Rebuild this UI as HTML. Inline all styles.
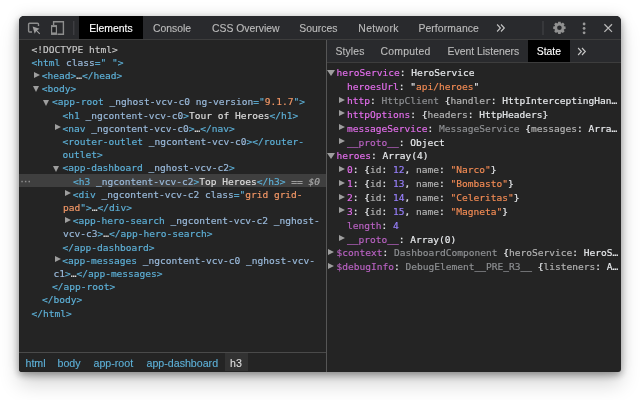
<!DOCTYPE html>
<html lang="en"><head><meta charset="utf-8"><title>DevTools</title>
<style>
html,body{margin:0;padding:0;}
body{width:640px;height:400px;background:#fff;position:relative;overflow:hidden;font-family:"Liberation Sans","DejaVu Sans",sans-serif;}
#win{position:absolute;left:19px;top:16px;width:602px;height:356px;background:#242424;border-radius:5px 5px 3px 3px;box-shadow:0 3px 7px rgba(0,0,0,.32),0 12px 20px rgba(0,0,0,.17),0 0 15px rgba(0,0,0,.13);overflow:hidden;will-change:transform;}
#win *{box-sizing:border-box;}
.abs{position:absolute;}
#tb{left:0;top:0;width:602px;height:24px;background:#292a2d;border-bottom:1px solid #3d3d3d;}
.tab{position:absolute;top:0;height:23px;line-height:25.2px;font-size:10.4px;-webkit-text-stroke:0.12px currentColor;color:#bcbcbc;white-space:nowrap;}
.tab.sel{background:#000;color:#fff;}
.row{position:absolute;height:13.2px;line-height:13.2px;white-space:pre;font-family:"DejaVu Sans Mono","Liberation Mono",monospace;font-size:9.55px;color:#dfdfdf;-webkit-text-stroke:0.16px currentColor;}
.t{color:#5db0d7}.a{color:#9bbbdc}.v{color:#f29766}.x{color:#dedede}.g{color:#c8c8c8}
.eq{color:#a8a8a8}
.n{color:#e36eec}.nd{color:#b962c2}.w{color:#e8eaed}.s{color:#f28b54}.num{color:#9980ff}.c{color:#8f9194}.k{color:#b4b4b4}
.arr{position:absolute;width:0;height:0;}
.arr.r{border-left:6.2px solid #9e9e9e;border-top:3.9px solid transparent;border-bottom:3.9px solid transparent;}
.arr.d{border-top:6.2px solid #9e9e9e;border-left:3.8px solid transparent;border-right:3.8px solid transparent;}
</style></head><body>
<div id="win">

<div id="tb" class="abs">
<div class="tab sel" style="left:60px;width:64px;text-align:center">Elements</div>
<div class="tab" style="left:134px;letter-spacing:0px">Console</div>
<div class="tab" style="left:193px;letter-spacing:0px">CSS Overview</div>
<div class="tab" style="left:280.3px;letter-spacing:0px">Sources</div>
<div class="tab" style="left:339.3px;letter-spacing:0.33px">Network</div>
<div class="tab" style="left:399.4px;letter-spacing:0.1px">Performance</div>
</div>
<div class="abs" style="left:0;top:157.7px;width:307px;height:13.8px;background:#3f3f3f"></div>
<div class="row" style="left:12.5px;top:26.5px"><span class="g">&lt;!DOCTYPE html&gt;</span></div>
<div class="row" style="left:12.5px;top:39.7px"><span class="t">&lt;html </span><span class="a">class</span><span class="t">="</span><span class="v"> </span><span class="t">"&gt;</span></div>
<div class="arr r" style="left:15.1px;top:55.6px"></div>
<div class="row" style="left:22.8px;top:52.9px"><span class="t">&lt;head&gt;</span><span class="x">…</span><span class="t">&lt;/head&gt;</span></div>
<div class="arr d" style="left:13.7px;top:70.3px"></div>
<div class="row" style="left:22.8px;top:66.1px"><span class="t">&lt;body&gt;</span></div>
<div class="arr d" style="left:24px;top:83.5px"></div>
<div class="row" style="left:33.1px;top:79.3px"><span class="t">&lt;app-root </span><span class="a">_nghost-vcv-c0 ng-version</span><span class="t">="</span><span class="v">9.1.7</span><span class="t">"&gt;</span></div>
<div class="row" style="left:43.6px;top:92.5px"><span class="t">&lt;h1 </span><span class="a">_ngcontent-vcv-c0</span><span class="t">&gt;</span><span class="x">Tour of Heroes</span><span class="t">&lt;/h1&gt;</span></div>
<div class="arr r" style="left:35.7px;top:108.4px"></div>
<div class="row" style="left:43.4px;top:105.7px"><span class="t">&lt;nav </span><span class="a">_ngcontent-vcv-c0</span><span class="t">&gt;</span><span class="x">…</span><span class="t">&lt;/nav&gt;</span></div>
<div class="row" style="left:43.6px;top:118.9px"><span class="t">&lt;router-outlet </span><span class="a">_ngcontent-vcv-c0</span><span class="t">&gt;&lt;/router-</span></div>
<div class="row" style="left:43.6px;top:132.1px"><span class="t">outlet&gt;</span></div>
<div class="arr d" style="left:34.3px;top:149.5px"></div>
<div class="row" style="left:43.4px;top:145.3px"><span class="t">&lt;app-dashboard </span><span class="a">_nghost-vcv-c2</span><span class="t">&gt;</span></div>
<div class="row" style="left:53.9px;top:158.5px"><span class="t">&lt;h3 </span><span class="a">_ngcontent-vcv-c2</span><span class="t">&gt;</span><span class="x">Top Heroes</span><span class="t">&lt;/h3&gt;</span><span class="eq"> == <i>$0</i></span></div>
<div class="arr r" style="left:46px;top:174.4px"></div>
<div class="row" style="left:53.7px;top:171.7px"><span class="t">&lt;div </span><span class="a">_ngcontent-vcv-c2 class</span><span class="t">="</span><span class="v">grid grid-</span></div>
<div class="row" style="left:44px;top:184.9px"><span class="v">pad</span><span class="t">"&gt;</span><span class="x">…</span><span class="t">&lt;/div&gt;</span></div>
<div class="arr r" style="left:46px;top:200.8px"></div>
<div class="row" style="left:53.7px;top:198.1px"><span class="t">&lt;app-hero-search </span><span class="a">_ngcontent-vcv-c2 _nghost-</span></div>
<div class="row" style="left:44px;top:211.3px"><span class="a">vcv-c3</span><span class="t">&gt;</span><span class="x">…</span><span class="t">&lt;/app-hero-search&gt;</span></div>
<div class="row" style="left:43.6px;top:224.5px"><span class="t">&lt;/app-dashboard&gt;</span></div>
<div class="arr r" style="left:35.5px;top:240.4px"></div>
<div class="row" style="left:43.2px;top:237.7px"><span class="t">&lt;app-messages </span><span class="a">_ngcontent-vcv-c0 _nghost-vcv-</span></div>
<div class="row" style="left:34.4px;top:250.9px"><span class="a">c1</span><span class="t">&gt;</span><span class="x">…</span><span class="t">&lt;/app-messages&gt;</span></div>
<div class="row" style="left:33px;top:264.1px"><span class="t">&lt;/app-root&gt;</span></div>
<div class="row" style="left:23px;top:277.3px"><span class="t">&lt;/body&gt;</span></div>
<div class="row" style="left:12.5px;top:290.5px"><span class="t">&lt;/html&gt;</span></div>
<div class="abs" style="left:0;top:336px;width:307px;height:20px;background:#242424;border-top:1px solid #4a4a4a"></div>
<div class="tab" style="left:6.5px;top:337px;height:18px;line-height:21.4px;font-size:10.65px;color:#5db0d7">html</div>
<div class="tab" style="left:38.5px;top:337px;height:18px;line-height:21.4px;font-size:10.65px;color:#5db0d7">body</div>
<div class="tab" style="left:74.5px;top:337px;height:18px;line-height:21.4px;font-size:10.65px;color:#5db0d7">app-root</div>
<div class="tab" style="left:127.5px;top:337px;height:18px;line-height:21.4px;font-size:10.65px;color:#5db0d7">app-dashboard</div>
<div class="tab" style="left:205.5px;top:337px;height:18px;line-height:21.4px;font-size:10.65px;width:23px;text-align:center;background:#323232;color:#dedede">h3</div>
<div class="abs" style="left:307px;top:24px;width:1px;height:332px;background:#565656"></div>
<div class="abs" style="left:308px;top:24px;width:294px;height:23.3px;background:#292a2d;border-bottom:1px solid #3d3d3d"></div>
<div class="tab" style="left:316.5px;top:24px;height:22px;line-height:24px;letter-spacing:0.12px">Styles</div>
<div class="tab" style="left:361.5px;top:24px;height:22px;line-height:24px;letter-spacing:0.25px">Computed</div>
<div class="tab" style="left:428.5px;top:24px;height:22px;line-height:24px;letter-spacing:0px">Event Listeners</div>
<div class="tab sel" style="left:509px;top:24px;height:22px;line-height:24px;width:41.7px;text-align:center">State</div>
<div class="arr d" style="left:308.3px;top:53.8px;border-left-width:4.1px;border-right-width:4.1px"></div>
<div class="row" style="left:317.6px;top:50.3px;height:13.85px;line-height:13.85px"><span class="n">heroService</span><span class="w">: HeroService</span></div>
<div class="row" style="left:328.1px;top:64.15px;height:13.85px;line-height:13.85px"><span class="n">heroesUrl</span><span class="w">: "</span><span class="s">api/heroes</span><span class="w">"</span></div>
<div class="arr r" style="left:319.5px;top:80.6px"></div>
<div class="row" style="left:328.1px;top:78px;height:13.85px;line-height:13.85px"><span class="n">http</span><span class="w">: </span><span class="c">HttpClient </span><span class="w">{</span><span class="k">handler</span><span class="w">: HttpInterceptingHan…</span></div>
<div class="arr r" style="left:319.5px;top:94.45px"></div>
<div class="row" style="left:328.1px;top:91.85px;height:13.85px;line-height:13.85px"><span class="n">httpOptions</span><span class="w">: {</span><span class="k">headers</span><span class="w">: HttpHeaders}</span></div>
<div class="arr r" style="left:319.5px;top:108.3px"></div>
<div class="row" style="left:328.1px;top:105.7px;height:13.85px;line-height:13.85px"><span class="n">messageService</span><span class="w">: </span><span class="c">MessageService </span><span class="w">{</span><span class="k">messages</span><span class="w">: Arra…</span></div>
<div class="arr r" style="left:319.5px;top:122.15px"></div>
<div class="row" style="left:328.1px;top:119.55px;height:13.85px;line-height:13.85px"><span class="nd">__proto__</span><span class="w">: Object</span></div>
<div class="arr d" style="left:308.3px;top:136.9px;border-left-width:4.1px;border-right-width:4.1px"></div>
<div class="row" style="left:317.6px;top:133.4px;height:13.85px;line-height:13.85px"><span class="n">heroes</span><span class="w">: Array(4)</span></div>
<div class="arr r" style="left:319.5px;top:149.85px"></div>
<div class="row" style="left:328.1px;top:147.25px;height:13.85px;line-height:13.85px"><span class="n">0</span><span class="w">: {</span><span class="k">id</span><span class="w">: </span><span class="num">12</span><span class="w">, </span><span class="k">name</span><span class="w">: </span><span class="s">"Narco"</span><span class="w">}</span></div>
<div class="arr r" style="left:319.5px;top:163.7px"></div>
<div class="row" style="left:328.1px;top:161.1px;height:13.85px;line-height:13.85px"><span class="n">1</span><span class="w">: {</span><span class="k">id</span><span class="w">: </span><span class="num">13</span><span class="w">, </span><span class="k">name</span><span class="w">: </span><span class="s">"Bombasto"</span><span class="w">}</span></div>
<div class="arr r" style="left:319.5px;top:177.55px"></div>
<div class="row" style="left:328.1px;top:174.95px;height:13.85px;line-height:13.85px"><span class="n">2</span><span class="w">: {</span><span class="k">id</span><span class="w">: </span><span class="num">14</span><span class="w">, </span><span class="k">name</span><span class="w">: </span><span class="s">"Celeritas"</span><span class="w">}</span></div>
<div class="arr r" style="left:319.5px;top:191.4px"></div>
<div class="row" style="left:328.1px;top:188.8px;height:13.85px;line-height:13.85px"><span class="n">3</span><span class="w">: {</span><span class="k">id</span><span class="w">: </span><span class="num">15</span><span class="w">, </span><span class="k">name</span><span class="w">: </span><span class="s">"Magneta"</span><span class="w">}</span></div>
<div class="row" style="left:328.1px;top:202.65px;height:13.85px;line-height:13.85px"><span class="nd">length</span><span class="w">: </span><span class="num">4</span></div>
<div class="arr r" style="left:319.5px;top:219.1px"></div>
<div class="row" style="left:328.1px;top:216.5px;height:13.85px;line-height:13.85px"><span class="nd">__proto__</span><span class="w">: Array(0)</span></div>
<div class="arr r" style="left:309px;top:232.95px"></div>
<div class="row" style="left:317.6px;top:230.35px;height:13.85px;line-height:13.85px"><span class="nd">$context</span><span class="w">: </span><span class="c">DashboardComponent </span><span class="w">{</span><span class="k">heroService</span><span class="w">: HeroS…</span></div>
<div class="arr r" style="left:309px;top:246.8px"></div>
<div class="row" style="left:317.6px;top:244.2px;height:13.85px;line-height:13.85px"><span class="nd">$debugInfo</span><span class="w">: </span><span class="c">DebugElement__PRE_R3__ </span><span class="w">{</span><span class="k">listeners</span><span class="w">: A…</span></div>
<svg class="abs" style="left:0;top:0" width="602" height="356" viewBox="19 16 602 356" fill="none"><path d="M38.5 26 V24.2 Q38.5 23.2 37.5 23.2 H29.6 Q28.6 23.2 28.6 24.2 V31 Q28.6 32 29.6 32 H32" stroke="#8e8e8e" stroke-width="1.4" stroke-linecap="butt"/><path d="M32.6 26.6 L39.5 28.7 L37 30.2 L40.2 33.4 L39.4 34.3 L36.2 31.1 L34.7 33.7 Z" fill="#a0a0a0"/><path d="M53.6 25.2 V21.7 H63.4 V34.2 H57.4" stroke="#8e8e8e" stroke-width="1.4"/><rect x="51.6" y="25.7" width="4.8" height="8.6" fill="#1f2022" stroke="#8e8e8e" stroke-width="1.2"/><rect x="51.6" y="25.7" width="4.8" height="1.4" fill="#8e8e8e"/><rect x="51.6" y="32.4" width="4.8" height="2" fill="#8e8e8e"/><rect x="73.3" y="21" width="1" height="14" fill="#46474a"/><rect x="542.5" y="21" width="1" height="14" fill="#46474a"/><path d="M557.95 23.12 L558.15 21.63 L560.65 21.63 L560.85 23.12 L561.69 23.47 L562.88 22.55 L564.65 24.32 L563.73 25.51 L564.08 26.35 L565.57 26.55 L565.57 29.05 L564.08 29.25 L563.73 30.09 L564.65 31.28 L562.88 33.05 L561.69 32.13 L560.85 32.48 L560.65 33.97 L558.15 33.97 L557.95 32.48 L557.11 32.13 L555.92 33.05 L554.15 31.28 L555.07 30.09 L554.72 29.25 L553.23 29.05 L553.23 26.55 L554.72 26.35 L555.07 25.51 L554.15 24.32 L555.92 22.55 L557.11 23.47 Z M557.10 27.80 a2.3 2.3 0 1 0 4.6 0 a2.3 2.3 0 1 0 -4.6 0 Z" fill="#919191" fill-rule="evenodd"/><circle cx="584.1" cy="24" r="1.4" fill="#9a9a9a"/><circle cx="584.1" cy="28.4" r="1.4" fill="#9a9a9a"/><circle cx="584.1" cy="32.8" r="1.4" fill="#9a9a9a"/><path d="M604.4 24.3 L612 31.9 M612 24.3 L604.4 31.9" stroke="#b6b6b6" stroke-width="1.3"/><path d="M497.1 24.5 l3.3 3.5 l-3.3 3.5 M501.0 24.5 l3.3 3.5 l-3.3 3.5" stroke="#c4c4c4" stroke-width="1.15"/><path d="M578.1 48 l3.3 3.5 l-3.3 3.5 M582.0 48 l3.3 3.5 l-3.3 3.5" stroke="#c4c4c4" stroke-width="1.15"/><rect x="21.3" y="180.8" width="1.5" height="1.5" fill="#8c8c8c"/><rect x="24.9" y="180.8" width="1.5" height="1.5" fill="#8c8c8c"/><rect x="28.5" y="180.8" width="1.5" height="1.5" fill="#8c8c8c"/></svg>
</div></body></html>
